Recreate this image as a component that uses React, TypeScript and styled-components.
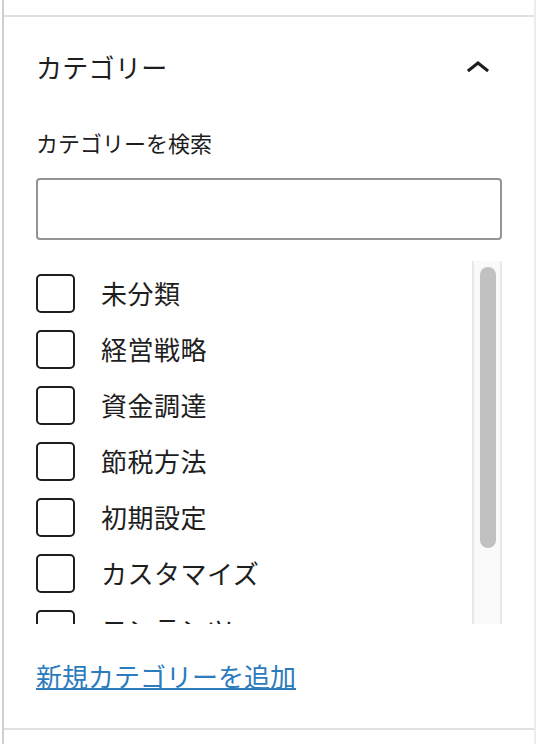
import styled, { createGlobalStyle } from "styled-components";

const GlobalStyle = createGlobalStyle`
  html, body {
    margin: 0;
    padding: 0;
    background: #ffffff;
  }
  body {
    font-family: "Noto Sans CJK JP", "Noto Sans", sans-serif;
    color: #1e1e1e;
  }
`;

const Sidebar = styled.div`
  box-sizing: border-box;
  margin-left: 2px;
  width: 534px;
  min-height: 744px;
  border-left: 2px solid #cfcfcf;
  border-right: 2px solid #ececec;
  display: flex;
  flex-direction: column;
`;

const PrevPanel = styled.div`
  height: 15px;
`;

const Panel = styled.section`
  border-top: 2px solid #e0e0e0;
  border-bottom: 2px solid #e0e0e0;
  padding: 0 32px 32px;
  display: flex;
  flex-direction: column;
`;

const Header = styled.div`
  height: 100px;
  display: flex;
  align-items: center;
  justify-content: space-between;
`;

const Title = styled.h2`
  margin: 0;
  font-size: 26px;
  font-weight: 400;
  line-height: 1;
  letter-spacing: 0.3px;
`;

const ToggleIcon = styled.svg`
  width: 48px;
  height: 48px;
  margin-top: 4px;
  fill: #1e1e1e;
`;

const SearchLabel = styled.label`
  margin-top: 9px;
  font-size: 22px;
  line-height: 32px;
`;

const SearchInput = styled.input`
  box-sizing: border-box;
  margin-top: 20px;
  width: 100%;
  height: 62px;
  border: 2px solid #949494;
  border-radius: 4px;
  background: #fff;
  font: inherit;
  font-size: 26px;
  padding: 0 16px;
  outline: none;
`;

const ListFrame = styled.div`
  margin-top: 21px;
  height: 363px;
  display: flex;
`;

const TermsList = styled.div`
  flex: 1;
  overflow: hidden;
  padding-top: 12px;
  display: flex;
  flex-direction: column;
  gap: 16px;
`;

const ScrollTrack = styled.div`
  box-sizing: border-box;
  width: 30px;
  background: #fafafa;
  border-left: 2px solid #e8e8e8;
  border-right: 2px solid #e8e8e8;
  padding: 6px 4px 0 6px;
`;

const ScrollThumb = styled.div`
  height: 281px;
  background: #c1c1c1;
  border-radius: 8px;
`;

const Choice = styled.label`
  display: flex;
  align-items: center;
  gap: 26px;
  flex-shrink: 0;
  height: 40px;
`;

const Box = styled.span`
  box-sizing: border-box;
  width: 39px;
  height: 39px;
  border: 2px solid #1e1e1e;
  border-radius: 5px;
  background: #fff;
  flex-shrink: 0;
`;

const ChoiceText = styled.span`
  font-size: 26px;
  line-height: 40px;
  letter-spacing: 0.5px;
`;

const AddLink = styled.a`
  margin-top: 32px;
  font-size: 26px;
  line-height: 40px;
  color: #2b7bbd;
  text-decoration: underline;
  text-decoration-thickness: 2px;
  align-self: flex-start;
  cursor: pointer;
`;

const NextPanel = styled.div`
  flex: 1;
`;

const categories = [
  "未分類",
  "経営戦略",
  "資金調達",
  "節税方法",
  "初期設定",
  "カスタマイズ",
  "コンテンツ",
];

const App = () => {
  return (
    <>
      <GlobalStyle />
      <Sidebar>
        <PrevPanel />
        <Panel>
          <Header>
            <Title>カテゴリー</Title>
            <ToggleIcon viewBox="0 0 24 24" aria-hidden="true">
              <path d="M6.5 12.4L12 8l5.5 4.4-.9 1.2L12 10l-4.6 3.6-1-1.2z" />
            </ToggleIcon>
          </Header>
          <SearchLabel htmlFor="category-search">カテゴリーを検索</SearchLabel>
          <SearchInput id="category-search" type="search" />
          <ListFrame>
            <TermsList>
              {categories.map((name) => (
                <Choice key={name}>
                  <Box />
                  <ChoiceText>{name}</ChoiceText>
                </Choice>
              ))}
            </TermsList>
            <ScrollTrack>
              <ScrollThumb />
            </ScrollTrack>
          </ListFrame>
          <AddLink>新規カテゴリーを追加</AddLink>
        </Panel>
        <NextPanel />
      </Sidebar>
    </>
  );
};

export default App;
